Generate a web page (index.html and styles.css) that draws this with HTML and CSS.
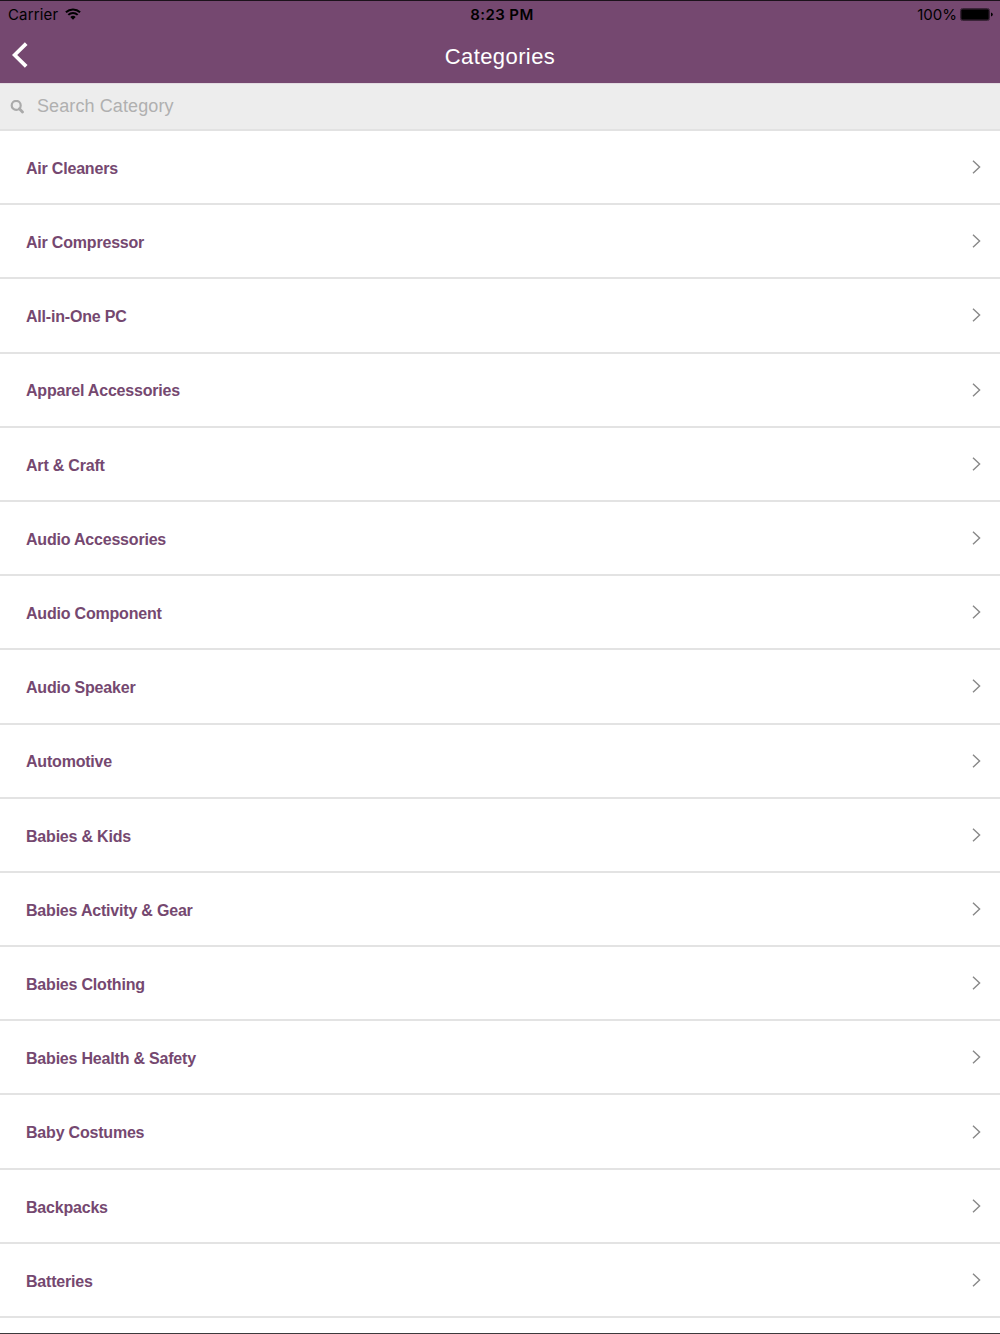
FILE: index.html
```html
<!DOCTYPE html>
<html lang="en">
<head>
    <meta charset="UTF-8">
    <meta name="viewport" content="width=device-width, initial-scale=1.0">
    <title>Categories</title>
    <link rel="stylesheet" href="styles.css">
</head>
<body>
    <header>
        <div class="status-bar">
            <div class="status-left">
                <span class="carrier">Carrier</span>
                <svg class="wifi" viewBox="0 0 16 12" width="16" height="12">
                    <path d="M.9 4.2a10.4 10.4 0 0 1 14.2 0M3.3 6.9a6.8 6.8 0 0 1 9.4 0" fill="none" stroke="#000" stroke-width="2"/>
                    <path d="M8 11.7 5.3 9a3.9 3.9 0 0 1 5.4 0z"/>
                </svg>
            </div>
            <span class="time">8:23 PM</span>
            <div class="status-right">
                <span class="percent">100%</span>
                <svg class="battery" viewBox="0 0 33 13" width="33" height="13">
                    <rect x="0.5" y="0.5" width="29" height="12" rx="2" fill="none" stroke="#3a2438"/>
                    <rect x="1.2" y="1.3" width="27.6" height="10.4" rx="1"/>
                    <path d="M31 4.5q1.8.5 1.8 2t-1.8 2z"/>
                </svg>
            </div>
        </div>
        <div class="title-bar">
            <a href="#" class="back-btn" aria-label="Back">
                <svg viewBox="0 0 16 26" width="16" height="26">
                    <path d="M14.2 1.6 2.6 13l11.6 11.4" fill="none" stroke="#fff" stroke-width="3.8"/>
                </svg>
            </a>
            <h1>Categories</h1>
        </div>
    </header>

    <div class="search">
        <svg viewBox="0 0 14 14" width="14" height="14">
            <circle cx="6.2" cy="5.4" r="4.5" fill="none" stroke="#aaa" stroke-width="2.2"/>
            <path d="m9.4 8.8 3.1 3.2" stroke="#aaa" stroke-width="2.8" stroke-linecap="round"/>
        </svg>
        <input type="text" placeholder="Search Category">
    </div>

    <ul id="categories"></ul>

    <script>
        const categories = [
            'Air Cleaners',
            'Air Compressor',
            'All-in-One PC',
            'Apparel Accessories',
            'Art & Craft',
            'Audio Accessories',
            'Audio Component',
            'Audio Speaker',
            'Automotive',
            'Babies & Kids',
            'Babies Activity & Gear',
            'Babies Clothing',
            'Babies Health & Safety',
            'Baby Costumes',
            'Backpacks',
            'Batteries'
        ];
        const list = document.getElementById('categories');

        // Add one row per category
        categories.forEach(name => {
            const item = document.createElement('li');
            item.innerHTML = `
                <span></span>
                <svg viewBox="0 0 9 14" width="9" height="14">
                    <path d="M1 .8 7.6 7 1 13.2" fill="none" stroke="#888" stroke-width="1.4"/>
                </svg>
            `;
            item.querySelector('span').textContent = name;
            list.appendChild(item);
        });
    </script>
</body>
</html>
```

FILE: styles.css
```css
* {
    box-sizing: border-box;
}

body {
    font-family: "Liberation Sans", Arial, sans-serif;
    margin: 0;
    height: 1334px;
    overflow: hidden;
    background-color: #fff;
    border-bottom: 1px solid #3c3a3c;
}

header {
    height: 83px;
    background-color: #754870;
    border-top: 1px solid #1c121b;
}

.status-bar {
    display: grid;
    grid-template-columns: 1fr auto 1fr;
    align-items: center;
    height: 26px;
    padding: 0 7px 0 8px;
    font-family: Inter, sans-serif;
    font-size: 15px;
    color: #000;
}

.status-left, .status-right {
    display: flex;
    align-items: center;
}

.status-left {
    gap: 7px;
}

.carrier {
    letter-spacing: 0.15px;
}

.status-right {
    justify-content: flex-end;
    gap: 3px;
}

.time {
    font-weight: 600;
    letter-spacing: 0.4px;
    padding-left: 3px;
}

.title-bar {
    display: grid;
    grid-template-columns: 1fr auto 1fr;
    align-items: center;
    height: 56px;
    padding: 0 12px;
}

.back-btn {
    display: flex;
}

h1 {
    margin: 0;
    padding-top: 3px;
    font-size: 22px;
    font-weight: normal;
    letter-spacing: 0.4px;
    color: #fff;
}

.search {
    display: flex;
    align-items: center;
    gap: 13px;
    height: 48px;
    padding: 0 10px;
    background-color: #ededed;
    border-top: 1px solid #e2dbe1;
    border-bottom: 2px solid #e2e2e2;
}

.search input {
    flex: 1;
    padding: 0;
    border: none;
    outline: none;
    background: none;
    font-family: inherit;
    font-size: 18px;
    letter-spacing: 0.1px;
}

.search input::placeholder {
    color: #b0b0b0;
}

ul {
    list-style: none;
    margin: 0;
    padding: 0;
}

li {
    display: flex;
    align-items: center;
    justify-content: space-between;
    height: 74.2px;
    padding: 0 19px 0 26px;
    border-bottom: 2px solid #e3e3e3;
    font-size: 16px;
    font-weight: bold;
    letter-spacing: -0.2px;
    color: #754870;
}

li span {
    padding-top: 3.6px;
}
```
